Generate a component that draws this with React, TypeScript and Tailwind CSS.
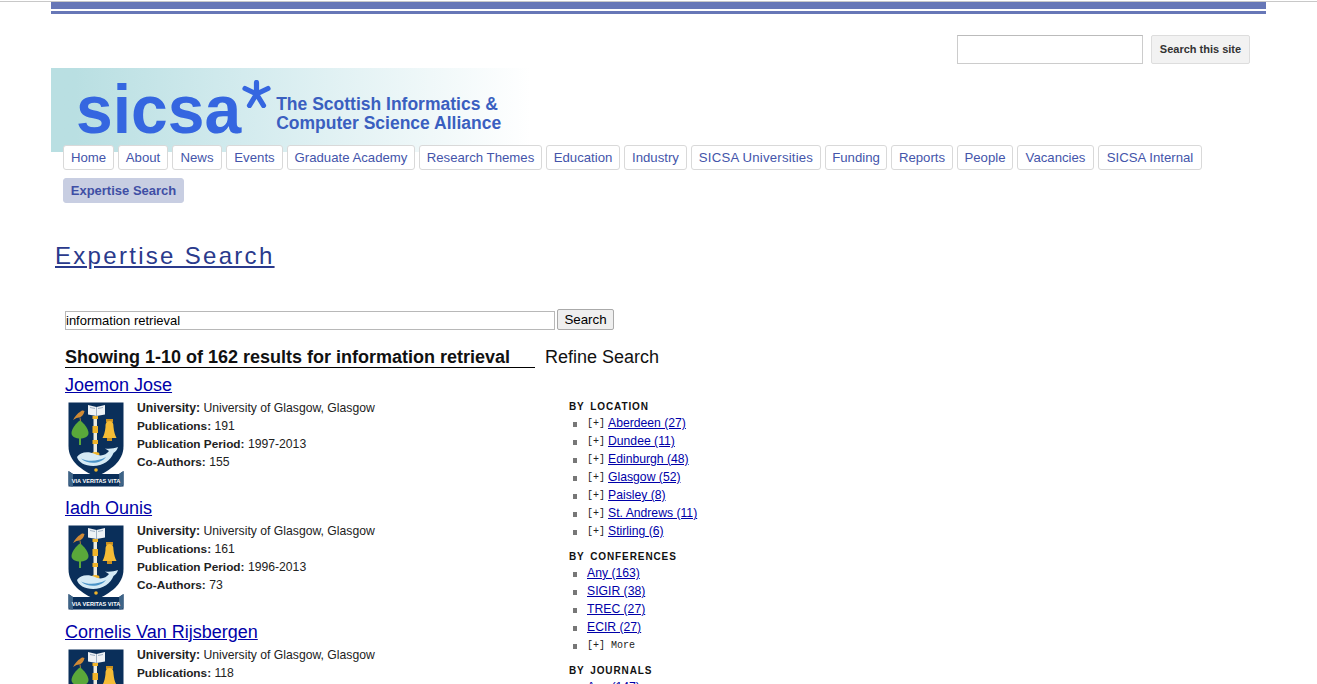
import React from "react";

const nav = [
  { n: "Home", c: "w-[51px]" },
  { n: "About", c: "w-[50px]" },
  { n: "News", c: "w-[50px]" },
  { n: "Events", c: "w-[57px]" },
  { n: "Graduate Academy", c: "w-[128px]" },
  { n: "Research Themes", c: "w-[123px]" },
  { n: "Education", c: "w-[74px]" },
  { n: "Industry", c: "w-[63px]" },
  { n: "SICSA Universities", c: "w-[130px] tracking-[0.2px]" },
  { n: "Funding", c: "w-[62px]" },
  { n: "Reports", c: "w-[62px]" },
  { n: "People", c: "w-[56px]" },
  { n: "Vacancies", c: "w-[77px]" },
  { n: "SICSA Internal", c: "w-[104px]" },
];

function Crest() {
  return (
    <svg width="56" height="85" viewBox="0 0 56 85" className="block shrink-0">
      <path d="M0.5 0.5H55.5V44C55.5 60 42 68 28 75C14 68 0.5 60 0.5 44Z" fill="#0a2f5a" />
      <path d="M0.5 69L5 72H51L55.5 69V84.5H0.5Z" fill="#0a2f5a" />
      <path d="M0.5 69L5 72V84.5H3L0.5 83Z M55.5 69L51 72V84.5H53L55.5 83Z" fill="#3e6487" />
      <path d="M20 3L28.5 5L37 3V12.5L28.5 14L20 12.5Z" fill="#eef2f6" />
      <path d="M28.5 5V14 M22 5.5L27 6.5 M35 5.5L30 6.5" stroke="#7f97b0" strokeWidth="0.7" />
      <path d="M25.5 14H29V52H25.5Z" fill="#ecebdf" />
      <path d="M24.5 14H30V17H24.5Z M24.5 24H30V31H24.5Z M24.5 38H30V42H24.5Z" fill="#f0b429" />
      <ellipse cx="27.5" cy="52" rx="4" ry="2" fill="#f0b429" />
      <path d="M5 18C7 14 10 11 12 10C13 8.5 15 8 16.5 9C16 12 14 15 11 15.5L8.5 16Z" fill="#d08a35" />
      <path d="M12 15.5L12.5 19" stroke="#d08a35" strokeWidth="0.8" />
      <path d="M12 18.5C16 21 20.5 27 20.5 31C20.5 35 16 36.5 12 36.5C8 36.5 3.5 35 3.5 31C3.5 27 8 21 12 18.5Z" fill="#5aa83a" />
      <path d="M11 33H13V43H11Z" fill="#5aa83a" />
      <path d="M38 17H45V20H38Z" fill="#c98f1e" />
      <path d="M41.5 19C45 19 45.5 22 45.5 25C46 30 47 33 48.5 36H34.5C36 33 37 30 37.5 25C37.5 22 38 19 41.5 19Z" fill="#f5bc36" />
      <path d="M39 36H44V39H39Z" fill="#c98f1e" />
      <path d="M9 55C12 50 20 49 27 52C33 55 38 53 41 49L37 46.5C42 47 46 46.5 50 45C49 48 48 49.5 45.5 51C43 58 35 64 25 64C17 64 10 60 9 55Z" fill="#d5eaf5" />
      <path d="M13 56.5C20 60 30 59.5 38 55C33 62 20 63 13 56.5Z" fill="#4a93c7" />
      <circle cx="28" cy="68" r="1.8" fill="#f0b429" />
      <text x="28" y="81" textAnchor="middle" fill="#ffffff" fontSize="5.6" fontWeight="700" fontFamily="'Liberation Sans', sans-serif">VIA VERITAS VITA</text>
    </svg>
  );
}

function Result({ name, period, pubs, coauthors, h }: { name: string; period?: string; pubs: string; coauthors?: string; h: string }) {
  return (
    <div className={h}>
      <a href="#" className="block text-[18px] leading-[21px] text-[#0000a8] underline">{name}</a>
      <div className="flex mt-[6px] pl-[3px] gap-[13px]">
        <Crest />
        <div className="text-[12.2px] leading-[18px] text-[#222222] -mt-[3px]">
          <div><b>University:</b> University of Glasgow, Glasgow</div>
          <div><b className="text-[11.8px]">Publications:</b> {pubs}</div>
          {period && <div><b className="text-[11.8px]">Publication Period:</b> {period}</div>}
          {coauthors && <div><b className="text-[11.8px]">Co-Authors:</b> {coauthors}</div>}
        </div>
      </div>
    </div>
  );
}

function FacetTitle({ children }: { children: React.ReactNode }) {
  return <div className="text-[10px] leading-[12px] font-bold tracking-[0.9px] [word-spacing:2px] text-[#111111] uppercase">{children}</div>;
}

function Item({ label, plus, more }: { label: string; plus?: boolean; more?: boolean }) {
  return (
    <li className="flex items-center h-[18px]">
      <span className="w-[4px] h-[5px] bg-[#777777] ml-[4px] mr-[10px] mt-[2px] shrink-0" />
      {plus && <span className="font-['Liberation_Mono',monospace] text-[10px] mr-[3px] mt-[1px] text-[#222222]">[+]</span>}
      {more ? <span className="font-['Liberation_Mono',monospace] text-[10px] mt-[1px] text-[#222222] ml-[3px]">More</span>
        : <a href="#" className="text-[12.2px] text-[#0000a8] underline">{label}</a>}
    </li>
  );
}

export default function App() {
  return (
    <div className="h-[684px] overflow-hidden bg-white font-['Liberation_Sans',Arial,sans-serif] text-black">
      <div className="h-[2px] border-t border-[#c8c8c8] mt-[1px]" />
      <div className="mx-[51px] w-[1215px]">
        <div className="h-[7px] bg-[#6777b7] -mt-[1px]" />
        <div className="h-[3px] bg-[#6777b7] mt-[2px]" />

        <div className="flex justify-end gap-2 mt-[21px] pr-[16px]">
          <div className="w-[186px] h-[29px] border border-[#cccccc] border-t-[#bbbbbb] bg-white" />
          <button className="w-[99px] h-[29px] border border-[#dddddd] rounded-[2px] bg-[#f2f2f2] text-[11px] font-bold text-[#333333]">Search this site</button>
        </div>

        <div className="flex items-start h-[84px] mt-[4px] w-[480px] bg-gradient-to-r from-[#b9dfe2] from-[5%] via-[#d3ebee] via-[40%] to-white pl-[25px]">
          <span className="inline-block origin-bottom scale-y-[1.05] text-[#3566e0] text-[66px] font-bold leading-[66px] mt-[9px]">sicsa</span>
          <svg width="29" height="28" viewBox="0 0 29 28" className="shrink-0 mt-[12px] ml-[1px]">
            <path d="M14.5 14V2.5 M14.5 14L3 8.5 M14.5 14L26 8.5 M14.5 14L7.5 25.5 M14.5 14L21.5 25.5" stroke="#3566e0" strokeWidth="5.2" strokeLinecap="round" fill="none" />
          </svg>
          <div className="text-[#3a5fc0] text-[17.5px] font-bold leading-[19px] mt-[27px] ml-[5px] whitespace-nowrap">
            The Scottish Informatics &amp;<br />Computer Science Alliance
          </div>
        </div>

        <nav className="flex flex-wrap gap-x-[4px] gap-y-[8px] pl-[12px] -mt-[7px] text-[13.2px] leading-[23px] relative">
          {nav.map(({ n, c }) => (
            <a key={n} href="#" className={`${c} h-[25px] text-center whitespace-nowrap border border-[#d9d9d9] rounded-[3px] bg-white text-[#4455aa]`}>{n}</a>
          ))}
          <a href="#" className="w-[121px] h-[25px] text-center whitespace-nowrap border border-[#c8cee2] rounded-[3px] bg-[#c8cee2] text-[#3f4fa5] font-bold text-[13px]">Expertise Search</a>
        </nav>

        <h1 className="mt-[37px] ml-[4px] text-[24px] leading-[32px] tracking-[2.3px] text-[#2a3a8c] underline font-normal">Expertise Search</h1>

        <div className="flex items-center mt-[39px] ml-[14px]">
          <div className="w-[490px] h-[19px] border border-[#b8b8b8] text-[13px] leading-[17px] text-black">information retrieval</div>
          <button className="ml-[2px] -mt-[2px] w-[57px] h-[21px] border border-[#aaaaaa] rounded-[2px] bg-[#efefef] text-[13.33px] text-black">Search</button>
        </div>

        <div className="flex ml-[14px] mt-[17px]">
          <div className="w-[470px] shrink-0">
            <div className="text-[18px] leading-[20px] font-bold border-b border-black text-[#111111]">Showing 1-10 of 162 results for information retrieval</div>
            <div className="mt-[7px]">
              <Result h="h-[123px]" name="Joemon Jose" pubs="191" period="1997-2013" coauthors="155" />
              <Result h="h-[124px]" name="Iadh Ounis" pubs="161" period="1996-2013" coauthors="73" />
              <Result h="h-[124px]" name="Cornelis Van Rijsbergen" pubs="118" period="1980-2013" coauthors="60" />
            </div>
          </div>
          <div className="ml-[10px]">
            <div className="text-[18px] leading-[21px] text-[#111111]">Refine Search</div>
            <div className="ml-[24px] mt-[33px]">
              <FacetTitle>By Location</FacetTitle>
              <ul className="mt-[1px]">
                <Item plus label="Aberdeen (27)" />
                <Item plus label="Dundee (11)" />
                <Item plus label="Edinburgh (48)" />
                <Item plus label="Glasgow (52)" />
                <Item plus label="Paisley (8)" />
                <Item plus label="St. Andrews (11)" />
                <Item plus label="Stirling (6)" />
              </ul>
              <div className="mt-[11px]"><FacetTitle>By Conferences</FacetTitle></div>
              <ul className="mt-[1px]">
                <Item label="Any (163)" />
                <Item label="SIGIR (38)" />
                <Item label="TREC (27)" />
                <Item label="ECIR (27)" />
                <Item plus more label="More" />
              </ul>
              <div className="mt-[11px]"><FacetTitle>By Journals</FacetTitle></div>
              <ul className="mt-[1px]">
                <Item label="Any (147)" />
              </ul>
            </div>
          </div>
        </div>
      </div>
    </div>
  );
}
